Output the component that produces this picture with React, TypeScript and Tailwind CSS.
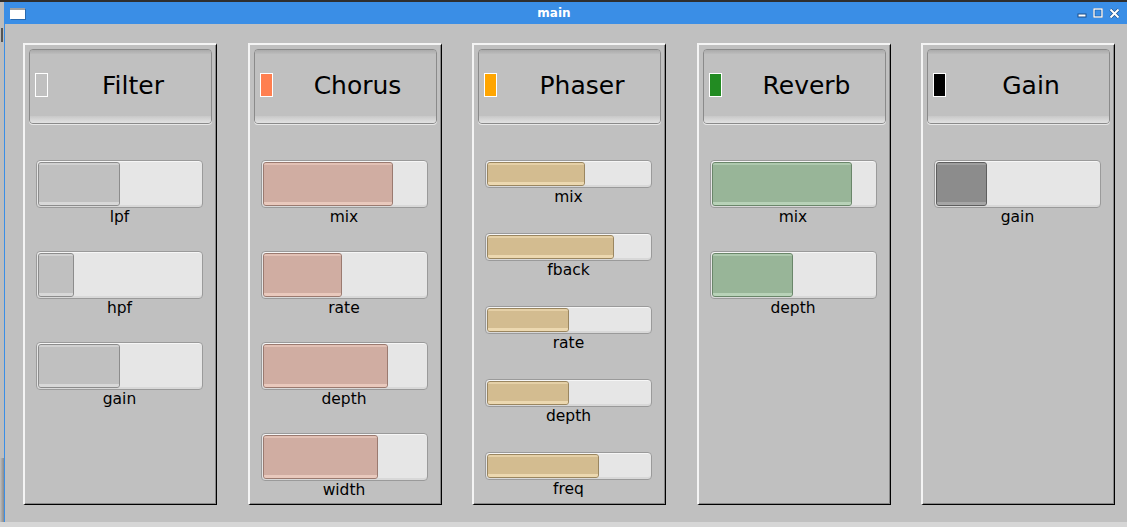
import React from 'react';

type Param = { label: string; value: number };
type Effect = {
  name: string;
  led: string;
  fill: string;
  fillBorder: string;
  fillLight: string;
  small?: boolean;
  params: Param[];
};

const effects: Effect[] = [
  {
    name: 'Filter',
    led: '#c0c0c0',
    fill: '#c0c0c0',
    fillBorder: '#8c8c8c',
    fillLight: '#d8d8d8',
    params: [
      { label: 'lpf', value: 0.5 },
      { label: 'hpf', value: 0.22 },
      { label: 'gain', value: 0.5 },
    ],
  },
  {
    name: 'Chorus',
    led: '#ff7f50',
    fill: '#d0ada2',
    fillBorder: '#9a7a70',
    fillLight: '#e9c9bd',
    params: [
      { label: 'mix', value: 0.8 },
      { label: 'rate', value: 0.49 },
      { label: 'depth', value: 0.77 },
      { label: 'width', value: 0.71 },
    ],
  },
  {
    name: 'Phaser',
    led: '#ffa500',
    fill: '#d3bc90',
    fillBorder: '#9a8660',
    fillLight: '#ecd8b0',
    small: true,
    params: [
      { label: 'mix', value: 0.6 },
      { label: 'fback', value: 0.78 },
      { label: 'rate', value: 0.5 },
      { label: 'depth', value: 0.5 },
      { label: 'freq', value: 0.69 },
    ],
  },
  {
    name: 'Reverb',
    led: '#228b22',
    fill: '#98b598',
    fillBorder: '#6a866a',
    fillLight: '#b8d2b8',
    params: [
      { label: 'mix', value: 0.86 },
      { label: 'depth', value: 0.5 },
    ],
  },
  {
    name: 'Gain',
    led: '#000000',
    fill: '#8c8c8c',
    fillBorder: '#5e5e5e',
    fillLight: '#a6a6a6',
    params: [{ label: 'gain', value: 0.31 }],
  },
];

function Slider({ fx, p }: { fx: Effect; p: Param }) {
  const h = fx.small ? 'h-[28px]' : 'h-[48px]';
  return (
    <div className="w-[167px] flex flex-col">
      <div
        className={`${h} w-[167px] rounded-[4px] border border-[#9a9a9a] bg-[#e6e6e6] p-[1px] flex shadow-[inset_0_1px_0_#f6f6f6,inset_0_-2px_0_#d8d8d8]`}
      >
        <div
          className="h-full rounded-[3px] border flex flex-col justify-between"
          style={{ width: `${p.value * 100}%`, background: fx.fill, borderColor: fx.fillBorder }}
        >
          <div className="h-[2px] rounded-t-[2px]" style={{ background: fx.fillLight, opacity: 0.7 }} />
          <div className="h-[3px] rounded-b-[2px]" style={{ background: fx.fillLight }} />
        </div>
      </div>
      <div className="h-[18px] leading-[18px] text-center text-[15.5px] text-black">{p.label}</div>
    </div>
  );
}

function Panel({ fx }: { fx: Effect }) {
  return (
    <div className="w-[194px] h-[462px] shrink-0 border-l-2 border-t-2 border-l-[#f4f4f4] border-t-[#f4f4f4] border-r border-b border-r-black border-b-black shadow-[inset_-1px_-1px_0_#888] bg-[#c0c0c0] flex flex-col">
      <div className="mx-[4px] mt-[4px] h-[75px] rounded-[4px] border border-[#8a8a8a] bg-[#c0c0c0] flex flex-col shadow-[0_1px_0_#e8e8e8]">
        <div className="h-[4px] rounded-t-[3px] bg-gradient-to-b from-[#aaaaaa] to-[#bcbcbc]" />
        <div className="flex-1 flex items-center">
          <div className="w-[25px] shrink-0 pl-[5px] flex items-center">
            <div
              className="w-[13px] h-[24px] border border-white"
              style={{ background: fx.led }}
            />
          </div>
          <div className="flex-1 text-center text-[25px] text-black mt-[1px]">{fx.name}</div>
        </div>
        <div className="h-[7px] rounded-b-[3px] bg-gradient-to-b from-[#c8c8c8] to-[#e2e2e2]" />
      </div>
      <div
        className={`mt-[36px] pl-[11px] flex flex-col ${fx.small ? 'gap-[27px]' : 'gap-[25px]'}`}
      >
        {fx.params.map((p) => (
          <Slider key={p.label} fx={fx} p={p} />
        ))}
      </div>
    </div>
  );
}

export default function App() {
  return (
    <div
      className="w-[1127px] h-[527px] bg-[#c0c0c0] overflow-hidden flex flex-col"
      style={{ fontFamily: '"DejaVu Sans", "Liberation Sans", sans-serif' }}
    >
      <div className="h-[2px] bg-[#2e2e2e] shrink-0" />
      <div className="flex flex-1 min-h-0">
        <div className="w-[4px] shrink-0 bg-[#bdbdbd] flex flex-col">
          <div className="h-[26px]" />
          <div className="h-[14px] w-[2px] ml-[1px] bg-[#555]" />
          <div className="flex-1" />
          <div className="h-[64px] bg-gradient-to-r from-[#c0c0c0] to-[#8a8a8a]" />
        </div>
        <div className="flex-1 flex flex-col border-l border-[#3a8ee6]">
          <div className="h-[22px] shrink-0 bg-[#3a8ee6] flex items-center">
            <div className="w-[26px] pl-[5px] flex items-center">
              <div className="w-[15px] h-[11px] bg-white border-t-2 border-[#a0a0a0] shadow-[1px_1px_0_#2a6aae]" />
            </div>
            <div className="flex-1 text-center text-white font-bold text-[12px]">main</div>
            <div className="w-[50px] flex items-center gap-[6px] text-white">
              <svg width="10" height="10" viewBox="0 0 10 10">
                <rect x="1" y="6" width="8" height="3" fill="#fff" stroke="#1d4f8a" strokeWidth="1" />
              </svg>
              <svg width="10" height="10" viewBox="0 0 10 10">
                <rect x="1" y="1" width="8" height="8" fill="none" stroke="#1d4f8a" strokeWidth="2.5" />
                <rect x="1" y="1" width="8" height="8" fill="none" stroke="#fff" strokeWidth="1.4" />
              </svg>
              <svg width="11" height="11" viewBox="0 0 11 11">
                <path d="M1.5 1.5 L9.5 9.5 M9.5 1.5 L1.5 9.5" stroke="#1d4f8a" strokeWidth="3.2" />
                <path d="M1.5 1.5 L9.5 9.5 M9.5 1.5 L1.5 9.5" stroke="#fff" strokeWidth="2" />
              </svg>
            </div>
          </div>
          <div className="flex-1 pl-[18px] pt-[19px] flex gap-[30.5px]">
            {effects.map((fx) => (
              <Panel key={fx.name} fx={fx} />
            ))}
          </div>
        </div>
      </div>
      <div className="h-[5px] shrink-0 bg-[#d6d6d6]" />
    </div>
  );
}
